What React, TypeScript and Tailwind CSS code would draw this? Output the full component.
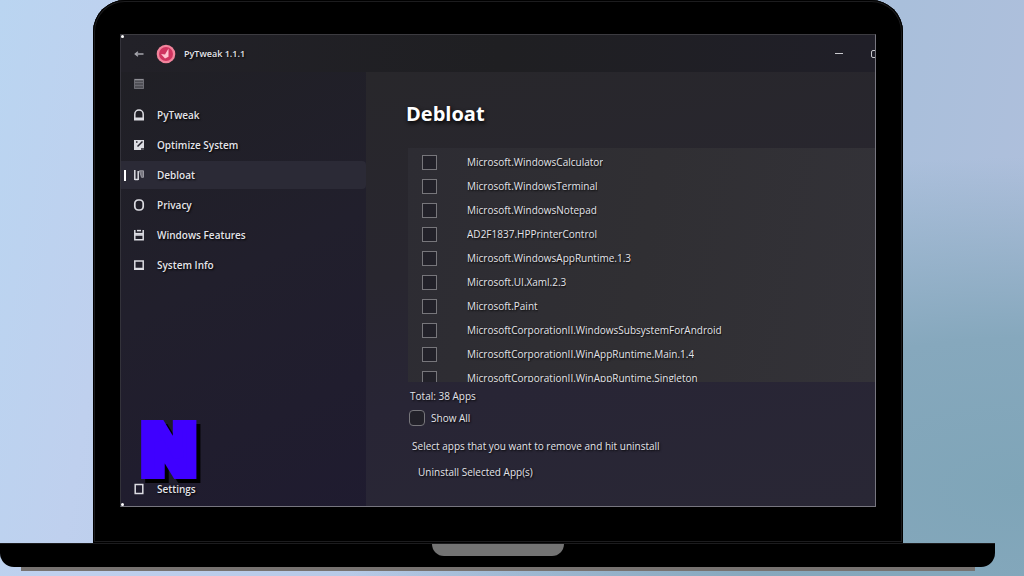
import type { ReactNode } from "react";

const APPS = [
  "Microsoft.WindowsCalculator",
  "Microsoft.WindowsTerminal",
  "Microsoft.WindowsNotepad",
  "AD2F1837.HPPrinterControl",
  "Microsoft.WindowsAppRuntime.1.3",
  "Microsoft.UI.Xaml.2.3",
  "Microsoft.Paint",
  "MicrosoftCorporationII.WindowsSubsystemForAndroid",
  "MicrosoftCorporationII.WinAppRuntime.Main.1.4",
  "MicrosoftCorporationII.WinAppRuntime.Singleton",
];

function Icon({ children }: { children: ReactNode }) {
  return (
    <svg
      viewBox="0 0 12 12"
      className="size-3 shrink-0"
      fill="none"
      stroke="#dcdce2"
      strokeWidth="1.5"
      aria-hidden="true"
    >
      {children}
    </svg>
  );
}

const NAV = [
  {
    label: "PyTweak",
    icon: <path d="M1.8 10.6V5.2C1.8 2.8 3.6 1 6 1s4.2 1.8 4.2 4.2v5.4M1 9.2h10M1 10.8h10" />,
  },
  {
    label: "Optimize System",
    icon: (
      <>
        <path d="M1 1h10v10H1z" fill="#dcdce2" stroke="none" />
        <path d="M4.5 7.5 9.5 2.5M8 10h3M3 3h1.5" stroke="#24232c" />
      </>
    ),
  },
  {
    label: "Debloat",
    icon: (
      <>
        <path d="M1.8 1v10M1.8 10.4h3.4M5.2 2v9" />
        <path d="M6.5 1.8h4v6.5h-2z" fill="#77767f" stroke="#9a99a2" strokeWidth="1" />
      </>
    ),
  },
  { label: "Privacy", icon: <rect x="1.8" y="1" width="8.4" height="10" rx="3.4" strokeWidth="1.7" /> },
  {
    label: "Windows Features",
    icon: (
      <>
        <path d="M1.8 1v9.8h8.4V1M1.8 6h8.4" />
        <path d="M1.8 4.8h8.4" strokeWidth="1.8" />
        <path d="M4 1.6h4" />
      </>
    ),
  },
  { label: "System Info", icon: <path d="M1.8 2h8.4v7.4H1.8zM1 10.2h10" /> },
];

const boxClass = "appearance-none shrink-0 border border-[#77767b] bg-[#222129]";

export default function App() {
  return (
    <div className="flex h-screen min-h-[480px] flex-col overflow-hidden bg-[radial-gradient(ellipse_at_100%_85%,#7fa5b8_0%,#86a8bd_22%,transparent_48%),linear-gradient(100deg,#bad5f1_0%,#bfd0ee_14%,#a9bfdb_80%,#b0bfdc_100%)] pb-[5px] font-['Open_Sans','Noto_Sans',sans-serif] text-[#e4e4ea]">
      <div className="ml-[93px] mr-[121px] flex min-h-0 flex-1 flex-col rounded-t-[32px] bg-black px-[27px] pb-9 pt-[34px] shadow-[inset_0_0_0_1px_#000,inset_0_0_0_2px_#1c1c1e]">
        <div className="relative flex min-h-0 flex-1 flex-col border border-b-[#77767f] border-l-[#33323a] border-r-[#77767f] border-t-[#3c3b40] bg-[linear-gradient(155deg,#202024_0%,#211f2c_35%,#1f1b30_75%,#211e2f_100%)] [text-shadow:1px_1px_2px_#000]">
          <header className="flex h-[37px] shrink-0 items-center bg-linear-to-r from-[#222128] via-[#1f1f22] to-[#201f28] pl-3">
            <button aria-label="Back" className="flex size-3 items-center justify-center">
              <svg viewBox="0 0 12 12" className="size-3" fill="none" stroke="#a5a5ac" strokeWidth="1.3">
                <path d="M10.5 6H2M5 3.8 2.2 6 5 8.2" />
              </svg>
            </button>
            <svg viewBox="0 0 20 20" className="ml-[11px] size-5" aria-hidden="true">
              <circle cx="10" cy="10" r="9.3" fill="#f2849c" />
              <circle cx="10" cy="10" r="7" fill="#cf3560" />
              <path d="M12.5 4.5v8.2L9 14.5 5 10l4 .5z" fill="#ffc3d0" />
            </svg>
            <h1 className="ml-2 text-[9px] font-semibold">PyTweak 1.1.1</h1>
            <div className="ml-auto flex items-center gap-7 overflow-hidden">
              <button aria-label="Minimize" className="flex h-3 w-2 items-center">
                <span className="block h-px w-full bg-[#c9c9ce]" />
              </button>
              <button aria-label="Maximize" className="-mr-1 size-2 rounded-xs border border-[#c9c9ce]" />
            </div>
          </header>

          <div className="flex min-h-0 flex-1">
            <aside className="flex w-[32.5%] shrink-0 flex-col pb-[3px]">
              <button aria-label="Menu" className="ml-3 mt-1.5 flex size-3 items-center">
                <svg viewBox="0 0 12 12" className="size-3" aria-hidden="true">
                  <path d="M1 1h10v10H1z" fill="#4f4f55" />
                  <path d="M1 1.6h10" stroke="#909096" strokeWidth="1.4" />
                  <path d="M1.5 1v9.5h9V1M1 4.5h10M1 7.4h10" fill="none" stroke="#6d6d74" />
                </svg>
              </button>
              <nav className="mt-[11px] flex flex-col gap-0.5">
                {NAV.map(({ label, icon }) => (
                  <a
                    key={label}
                    href="#"
                    aria-current={label === "Debloat" ? "page" : undefined}
                    className="flex h-7 items-center gap-[7px] rounded-r-sm pl-[3px] text-[10px] font-semibold aria-[current=page]:bg-[#2b2a36]"
                  >
                    <span className={label === "Debloat" ? "h-[11px] w-0.5 bg-white" : "h-[11px] w-0.5"} />
                    <Icon>{icon}</Icon>
                    <span className="ml-[5px]">{label}</span>
                  </a>
                ))}
              </nav>
              <a href="#" className="mt-auto flex h-7 items-center pl-3 text-[10px] font-semibold">
                <Icon>
                  <path d="M2.2 1.4h7.6v9.2H2.2z" />
                </Icon>
                <span className="ml-3">Settings</span>
              </a>
            </aside>

            <main className="flex min-w-0 flex-1 flex-col bg-[linear-gradient(170deg,#28272b_0%,#28262f_40%,#282535_65%,#292735_100%)] pb-[26px] pl-10">
              <h2 className="mt-7 text-[20px] font-bold leading-7 text-white [text-shadow:1px_2px_4px_#000]">
                Debloat
              </h2>
              <ul className="ml-0.5 mt-5 min-h-0 flex-1 overflow-hidden bg-[linear-gradient(100deg,#2d2c33_0%,#302f33_50%,#333238_100%)] pt-0.5">
                {APPS.map((app) => (
                  <li key={app}>
                    <label className="flex h-6 items-center gap-[30px] pl-3.5 text-[10px] font-medium">
                      <input type="checkbox" className={`${boxClass} size-[15px]`} />
                      <span className="truncate">{app}</span>
                    </label>
                  </li>
                ))}
              </ul>
              <p className="ml-1 mt-1.5 text-[10px] font-medium leading-4">Total: 38 Apps</p>
              <label className="ml-[3px] mt-1.5 flex h-4 items-center gap-1.5 text-[10px] font-medium">
                <input type="checkbox" className={`${boxClass} size-4 rounded-[4px]`} />
                Show All
              </label>
              <p className="ml-1.5 mt-3 text-[10px] font-medium leading-4">
                Select apps that you want to remove and hit uninstall
              </p>
              <button className="ml-3 mt-[10px] self-start text-[10px] font-medium leading-4 [text-shadow:inherit]">
                Uninstall Selected App(s)
              </button>
            </main>
          </div>

          <span className="absolute left-0 top-0 size-[3px] rounded-full bg-white" />
          <span className="absolute bottom-0 left-0 size-[3px] rounded-full bg-white" />
          <div
            aria-hidden="true"
            className="absolute bottom-[27px] left-[22px] font-[Inter] text-[67px] font-black leading-[58px] text-[#3f00ff] drop-shadow-[4px_4px_0_#000] [-webkit-text-stroke:10px_#3f00ff] [text-shadow:none]"
          >
            N
          </div>
        </div>
      </div>

      <div className="mr-[29px] flex h-6 shrink-0 justify-center rounded-b-[14px] border-t border-[#1c1c1e] bg-black">
        <div className="h-3 w-[132px] rounded-b-[12px] bg-[#737373]" />
      </div>
      <div className="ml-[21px] mr-[49px] h-1 shrink-0 bg-[#777371]" />
    </div>
  );
}
